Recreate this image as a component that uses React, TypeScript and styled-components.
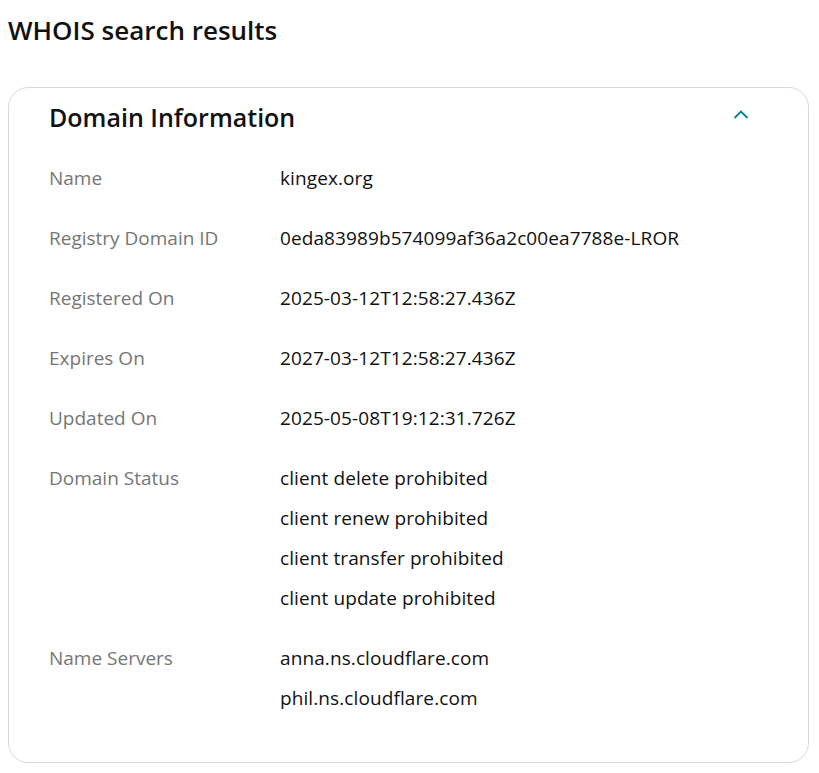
import React from "react";
import styled, { createGlobalStyle } from "styled-components";

const Global = createGlobalStyle`
  body {
    margin: 8px;
    background: #ffffff;
    font-family: "Open Sans", "Noto Sans", sans-serif;
    color: #111111;
  }
`;

const PageTitle = styled.h1`
  margin: 6px 0 0;
  font-size: 26px;
  line-height: 32px;
  font-weight: 600;
  color: #111111;
`;

const Card = styled.section`
  margin: 41px 2px 0 0;
  border: 1px solid #d4dbe0;
  border-radius: 20px;
  padding: 13px 40px 44px 40px;
`;

const Header = styled.div`
  display: flex;
  align-items: center;
  justify-content: space-between;
  height: 32px;
  margin-bottom: 25px;
`;

const CardTitle = styled.h2`
  margin: 0;
  font-size: 25px;
  line-height: 32px;
  font-weight: 600;
  color: #111111;
`;

const Toggle = styled.button`
  display: flex;
  align-items: center;
  justify-content: center;
  width: 24px;
  height: 24px;
  margin-right: 15px;
  margin-top: -4px;
  padding: 0;
  border: none;
  background: none;
  color: #00838c;
  cursor: pointer;
`;

const Grid = styled.dl`
  display: grid;
  grid-template-columns: 231px 1fr;
  row-gap: 20px;
  margin: 0;
`;

const Label = styled.dt`
  font-size: 19px;
  line-height: 40px;
  color: #767676;
`;

const Values = styled.dd`
  margin: 0;
  display: flex;
  flex-direction: column;
`;

const Value = styled.span`
  font-size: 19px;
  line-height: 40px;
  letter-spacing: 0.1px;
  color: #111111;
`;

const rows: [string, string[]][] = [
  ["Name", ["kingex.org"]],
  ["Registry Domain ID", ["0eda83989b574099af36a2c00ea7788e-LROR"]],
  ["Registered On", ["2025-03-12T12:58:27.436Z"]],
  ["Expires On", ["2027-03-12T12:58:27.436Z"]],
  ["Updated On", ["2025-05-08T19:12:31.726Z"]],
  [
    "Domain Status",
    [
      "client delete prohibited",
      "client renew prohibited",
      "client transfer prohibited",
      "client update prohibited",
    ],
  ],
  ["Name Servers", ["anna.ns.cloudflare.com", "phil.ns.cloudflare.com"]],
];

export default function App() {
  return (
    <>
      <Global />
      <PageTitle>WHOIS search results</PageTitle>
      <Card>
        <Header>
          <CardTitle>Domain Information</CardTitle>
          <Toggle aria-label="Collapse">
            <svg width="20" height="20" viewBox="0 0 20 20" fill="none">
              <path d="M3.5 13 L10 6.5 L16.5 13" stroke="currentColor" strokeWidth="1.8" />
            </svg>
          </Toggle>
        </Header>
        <Grid>
          {rows.map(([label, vals]) => (
            <React.Fragment key={label}>
              <Label>{label}</Label>
              <Values>
                {vals.map((v) => (
                  <Value key={v}>{v}</Value>
                ))}
              </Values>
            </React.Fragment>
          ))}
        </Grid>
      </Card>
    </>
  );
}
